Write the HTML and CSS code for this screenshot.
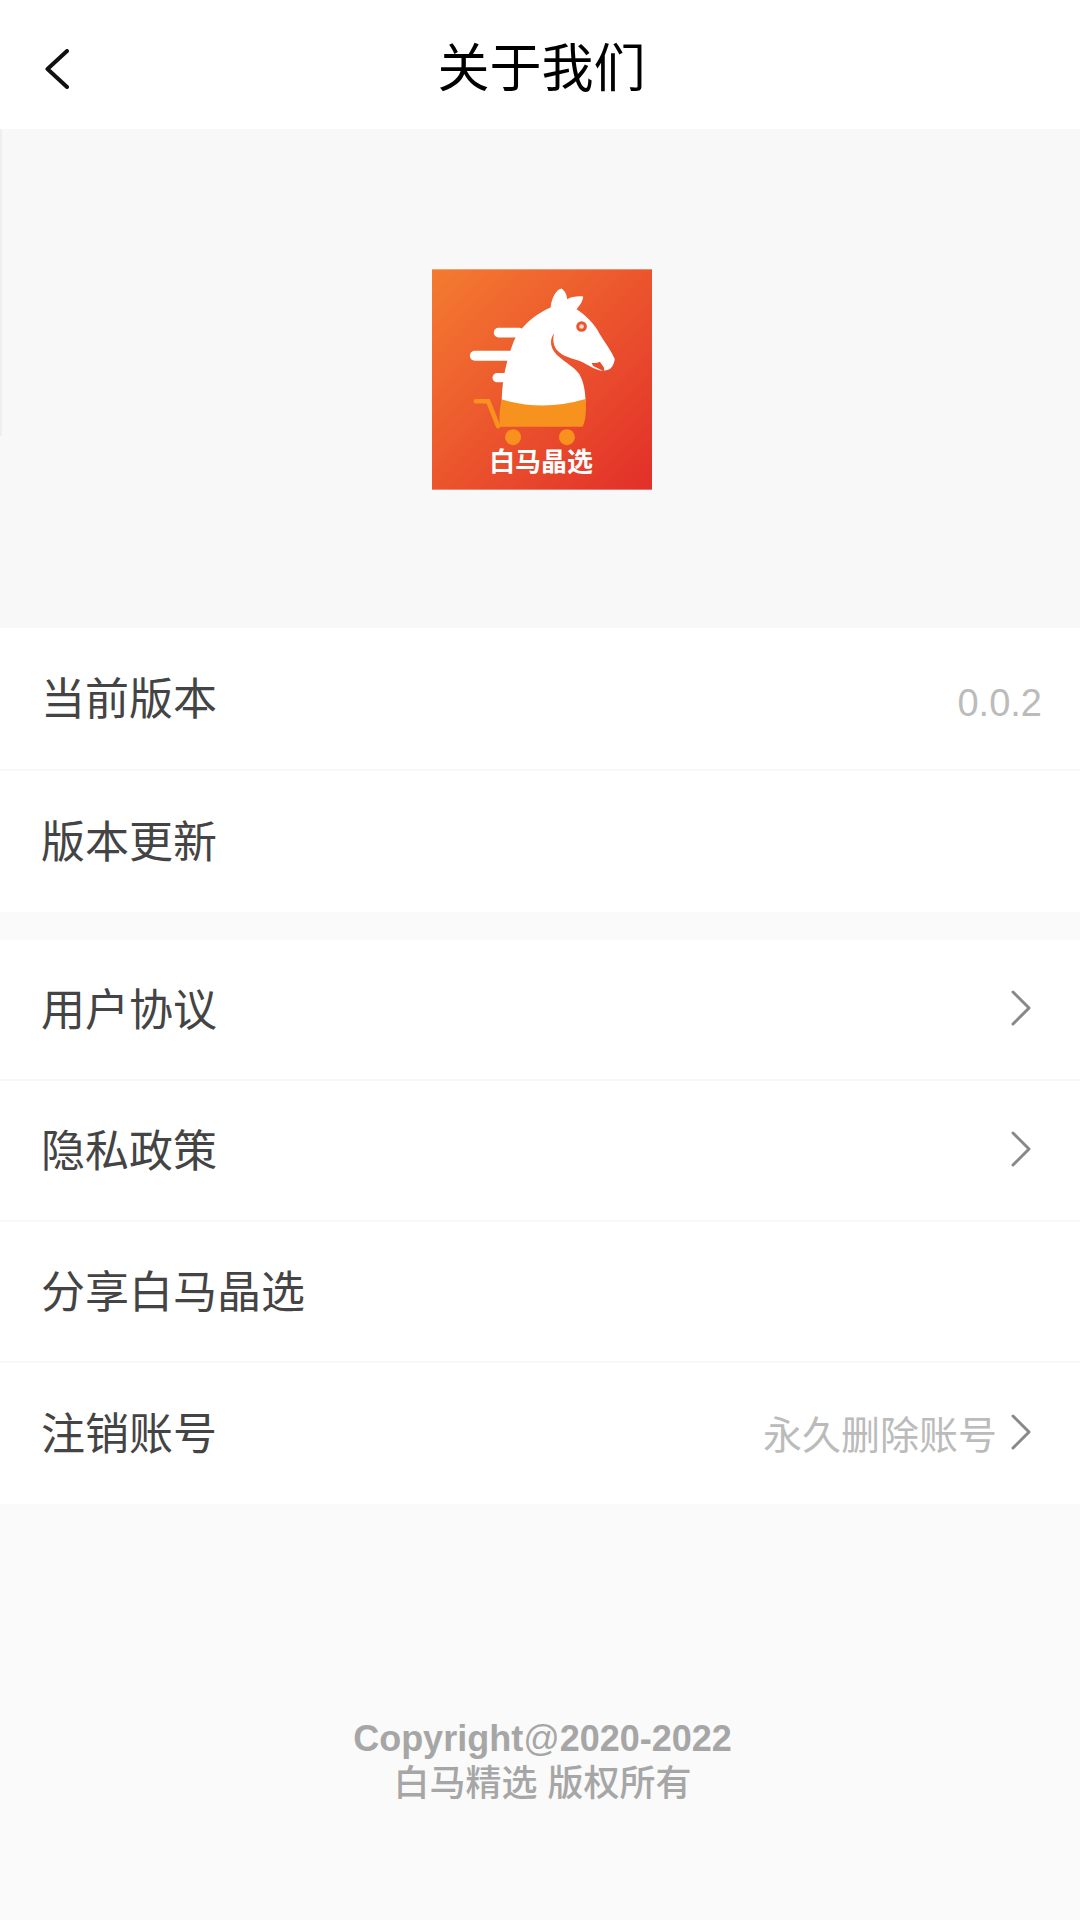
FILE: index.html
```html
<!DOCTYPE html>
<html lang="zh-CN">
<head>
  <meta charset="UTF-8" />
  <meta name="viewport" content="width=device-width, initial-scale=1.0"/>
  <title>关于我们</title>
  <link rel="stylesheet" href="styles.css">
</head>
<body>

<div class="edge"></div>

<header class="topbar">
  <svg class="back" viewBox="0 0 24 40" aria-hidden="true"><path d="M22 2 L2.5 20 L22 38"/></svg>
  <h1>关于我们</h1>
</header>

<section class="hero">
  <svg class="logo" viewBox="35 40 662 663" role="img" aria-label="白马晶选">
    <defs>
      <linearGradient id="logoBg" x1="0" y1="0" x2="1" y2="1">
        <stop offset="0" stop-color="#f47b30"/>
        <stop offset="1" stop-color="#e22f2a"/>
      </linearGradient>
    </defs>
    <rect x="35" y="40" width="662" height="663" fill="url(#logoBg)"/>
    <g fill="#fff">
      <rect x="221" y="216" width="90" height="29" rx="14"/>
      <rect x="149" y="285" width="130" height="30" rx="15"/>
      <rect x="217" y="352" width="50" height="28" rx="14"/>
      <path d="M392 155 C395 125 408 102 425 98 C435 105 440 115 442 130 C455 122 475 120 490 122 C488 140 478 150 470 160 C500 180 525 205 540 235 C555 260 575 285 585 310 C583 325 575 340 565 342 L553 345 L552 335 L540 318 C533 322 525 322 515 322 L520 331 L550 346 C525 342 505 328 485 318 C460 308 430 305 410 282 C400 270 398 252 402 232 C390 250 390 270 403 288 C420 312 458 328 478 355 C490 375 497 405 497 440 L370 475 L245 440 C245 385 256 320 278 265 C296 215 345 175 392 155 Z"/>
    </g>
    <circle cx="485" cy="212" r="16" fill="#e8562e"/>
    <circle cx="485" cy="212" r="7" fill="#fbd9c8"/>
    <path d="M245 432 Q370 468 497 430 C500 465 497 498 488 514 L240 514 C235 485 240 455 245 432 Z" fill="#f7921e"/>
    <path d="M167 437 H204 L234 512" fill="none" stroke="#f7921e" stroke-width="14" stroke-linecap="round"/>
    <circle cx="279" cy="545" r="24" fill="#f7921e"/>
    <circle cx="441" cy="545" r="24" fill="#f7921e"/>
    <text class="logo-text" x="363" y="646" text-anchor="middle">白马晶选</text>
  </svg>
</section>

<section class="group">
  <div class="row row-first"><span class="label">当前版本</span><span class="value version">0.0.2</span></div>
  <div class="row"><span class="label">版本更新</span></div>
</section>

<section class="group">
  <div class="row">
    <span class="label">用户协议</span>
    <svg class="arrow" viewBox="0 0 20 36" aria-hidden="true"><path d="M2 2 L18 18 L2 34"/></svg>
  </div>
  <div class="row">
    <span class="label">隐私政策</span>
    <svg class="arrow" viewBox="0 0 20 36" aria-hidden="true"><path d="M2 2 L18 18 L2 34"/></svg>
  </div>
  <div class="row"><span class="label">分享白马晶选</span></div>
  <div class="row">
    <span class="label">注销账号</span>
    <span class="value">永久删除账号</span>
    <svg class="arrow" viewBox="0 0 20 36" aria-hidden="true"><path d="M2 2 L18 18 L2 34"/></svg>
  </div>
</section>

<footer class="copyright">
  <p class="years">Copyright<span class="at">@</span>2020-2022</p>
  <p class="owner">白马精选 版权所有</p>
</footer>

</body>
</html>
```

FILE: styles.css
```css
* {
  box-sizing: border-box;
}
html, body {
  height: 100%;
}
body {
  margin: 0;
  display: flex;
  flex-direction: column;
  background: #fafafa;
  color: #444;
  font-family: "Liberation Sans", "Noto Sans CJK SC", sans-serif;
}
.edge {
  position: absolute;
  left: 0;
  top: 0;
  width: 2px;
  height: 436px;
  background: #efefef;
}
.topbar {
  height: 129px;
  flex: none;
  position: relative;
  background: #fff;
  display: flex;
  align-items: center;
  justify-content: center;
  padding-left: 3px;
}
.topbar h1 {
  margin: 0;
  font-size: 52px;
  font-weight: 400;
  color: #000;
  line-height: 1;
  position: relative;
  top: 4px;
}
.back {
  position: absolute;
  left: 45px;
  top: 49px;
  width: 24px;
  height: 40px;
  fill: none;
  stroke: #111;
  stroke-width: 4;
  stroke-linecap: round;
  stroke-linejoin: round;
}
.hero {
  height: 499px;
  flex: none;
  background: #f8f8f8;
  display: flex;
  align-items: center;
  justify-content: center;
  padding-left: 3px;
}
.logo {
  width: 220px;
  height: 221px;
  margin-top: 1px;
}
.logo-text {
  font-size: 78px;
  font-weight: 700;
  fill: #fff;
}
.group {
  flex: none;
  background: #fff;
  margin-bottom: 28px;
}
.group:last-of-type {
  margin-bottom: 0;
}
.row {
  height: 141px;
  padding: 0 38px 0 41px;
  display: flex;
  align-items: center;
  font-size: 44px;
  border-bottom: 2px solid #f8f8f8;
}
.row-first {
  height: 143px;
}
.row:last-child {
  border-bottom: none;
}
.label {
  margin-right: auto;
  margin-bottom: 6px;
}
.value {
  font-size: 39px;
  color: #bbb;
  margin-bottom: 3px;
}
.version {
  font-size: 38px;
  margin-bottom: -10px;
}
.arrow {
  width: 20px;
  height: 36px;
  margin: 0 11px 3px 14px;
  fill: none;
  stroke: #888;
  stroke-width: 3;
  stroke-linecap: round;
  stroke-linejoin: round;
}
.copyright {
  flex: 1;
  padding: 212px 0 0 5px;
  text-align: center;
  font-size: 36px;
  line-height: 45px;
  color: #a6a6a6;
}
.copyright p {
  margin: 0;
}
.years {
  font-weight: 700;
}
.at {
  font-weight: 400;
}
.owner {
  font-weight: 500;
}
```
